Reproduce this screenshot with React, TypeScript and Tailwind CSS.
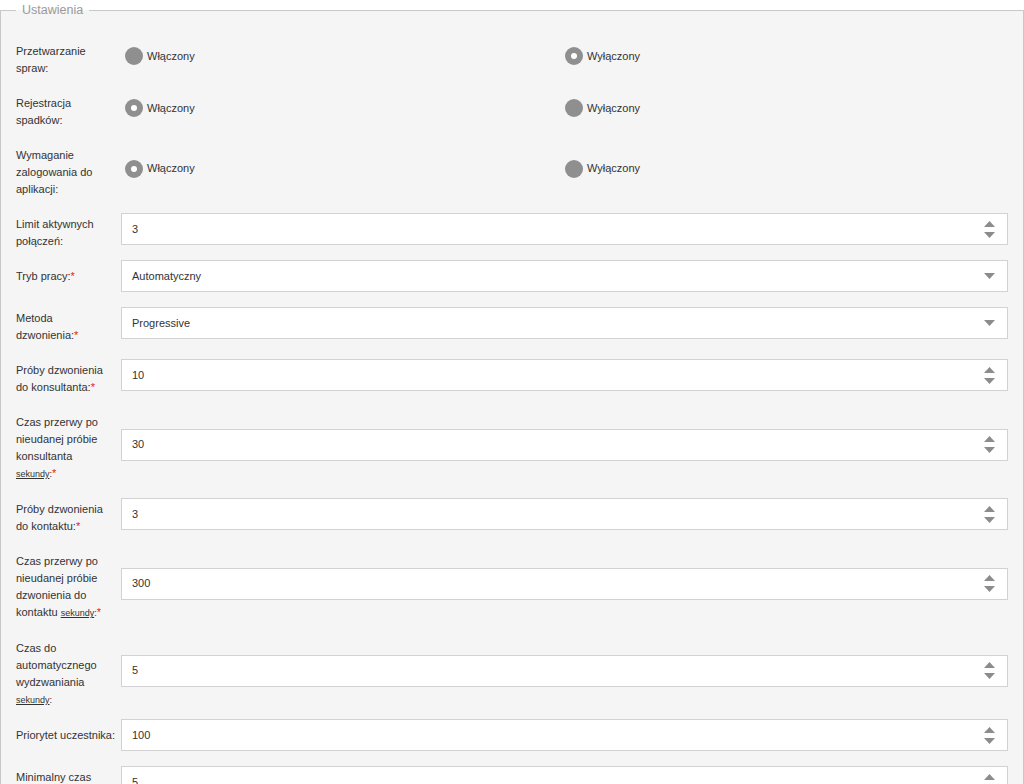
import React from "react";

function Req() {
  return <span className="text-[#e2231a]">*</span>;
}

function Sek({ req }: { req?: boolean }) {
  return (
    <>
      <abbr className="text-[9px] leading-none underline decoration-solid" title="sekundy">
        sekundy
      </abbr>
      <span className="text-[9px] leading-none">:</span>
      {req && <Req />}
    </>
  );
}

function Label({ children, multi, sek }: { children: React.ReactNode; multi?: boolean; sek?: boolean }) {
  return (
    <div
      className={
        "w-[105px] shrink-0 pr-[3px] text-[11px] leading-[17px] text-[#333] " +
        (multi ? "pt-[8px] " : "") +
        (sek ? "pb-[1px]" : "")
      }
    >
      {children}
    </div>
  );
}

function Spinner() {
  return (
    <div className="absolute right-[12px] top-0 bottom-0 flex flex-col justify-center gap-[5px]">
      <svg width="11" height="6" viewBox="0 0 11 6">
        <polygon points="0,6 5.5,0 11,6" fill="#8c8c8c" />
      </svg>
      <svg width="11" height="6" viewBox="0 0 11 6">
        <polygon points="0,0 11,0 5.5,6" fill="#8c8c8c" />
      </svg>
    </div>
  );
}

function Caret() {
  return (
    <div className="absolute right-[12px] top-0 bottom-0 flex items-center">
      <svg width="11" height="6" viewBox="0 0 11 6">
        <polygon points="0,0 11,0 5.5,6" fill="#8c8c8c" />
      </svg>
    </div>
  );
}

function Field({ value, kind }: { value: string; kind: "num" | "select" }) {
  return (
    <div className="relative flex-1 h-[32px] border border-[#d2d2d2] bg-white flex items-center pl-[10px] text-[11px] text-[#333]">
      {value}
      {kind === "num" ? <Spinner /> : <Caret />}
    </div>
  );
}

function Radio({ checked, label }: { checked?: boolean; label: string }) {
  return (
    <div className="flex items-center ml-[4px]">
      <span className="w-[18px] h-[18px] rounded-full bg-[#8f8f8f] flex items-center justify-center shrink-0">
        {checked && <span className="w-[6px] h-[6px] rounded-full bg-white" />}
      </span>
      <span className="ml-[4px] text-[11px] text-[#333]">{label}</span>
    </div>
  );
}

function RadioRow({ on, children }: { on: boolean; children: React.ReactNode }) {
  return (
    <div className="flex items-center">
      <Label multi>{children}</Label>
      <div className="flex flex-1 items-center">
        <div className="w-[440px]">
          <Radio checked={on} label="Włączony" />
        </div>
        <div className="flex-1">
          <Radio checked={!on} label="Wyłączony" />
        </div>
      </div>
    </div>
  );
}

function InRow({
  children,
  value,
  kind = "num",
  multi,
  sek,
}: {
  children: React.ReactNode;
  value: string;
  kind?: "num" | "select";
  multi?: boolean;
  sek?: boolean;
}) {
  return (
    <div className="flex items-center">
      <Label multi={multi} sek={sek}>
        {children}
      </Label>
      <Field value={value} kind={kind} />
    </div>
  );
}

export default function App() {
  return (
    <div className="w-[1024px] min-h-[784px] bg-white font-['Liberation_Sans',Arial,sans-serif]">
      <fieldset className="w-[1024px] border border-[#c8c8c8] bg-[#f5f5f5] px-[15px] pb-[20px]">
        <legend className="px-[6px] text-[12.5px] leading-[20px] text-[#9a9a9a]">Ustawienia</legend>
        <div className="flex flex-col gap-[10px] pt-[15px]">
          <RadioRow on={false}>
            Przetwarzanie
            <br />
            spraw:
          </RadioRow>
          <RadioRow on={true}>
            Rejestracja
            <br />
            spadków:
          </RadioRow>
          <RadioRow on={true}>
            Wymaganie
            <br />
            zalogowania do
            <br />
            aplikacji:
          </RadioRow>
          <InRow value="3" multi>
            Limit aktywnych
            <br />
            połączeń:
          </InRow>
          <InRow value="Automatyczny" kind="select">
            Tryb pracy:<Req />
          </InRow>
          <InRow value="Progressive" kind="select" multi>
            Metoda
            <br />
            dzwonienia:<Req />
          </InRow>
          <InRow value="10" multi>
            Próby dzwonienia
            <br />
            do konsultanta:<Req />
          </InRow>
          <InRow value="30" multi sek>
            Czas przerwy po
            <br />
            nieudanej próbie
            <br />
            konsultanta
            <br />
            <Sek req />
          </InRow>
          <InRow value="3" multi>
            Próby dzwonienia
            <br />
            do kontaktu:<Req />
          </InRow>
          <InRow value="300" multi sek>
            Czas przerwy po
            <br />
            nieudanej próbie
            <br />
            dzwonienia do
            <br />
            kontaktu <Sek req />
          </InRow>
          <InRow value="5" multi sek>
            Czas do
            <br />
            automatycznego
            <br />
            wydzwaniania
            <br />
            <Sek />
          </InRow>
          <InRow value="100">Priorytet uczestnika:</InRow>
          <InRow value="5" multi>
            Minimalny czas
            <br />
            rozmowy:
          </InRow>
        </div>
      </fieldset>
    </div>
  );
}
